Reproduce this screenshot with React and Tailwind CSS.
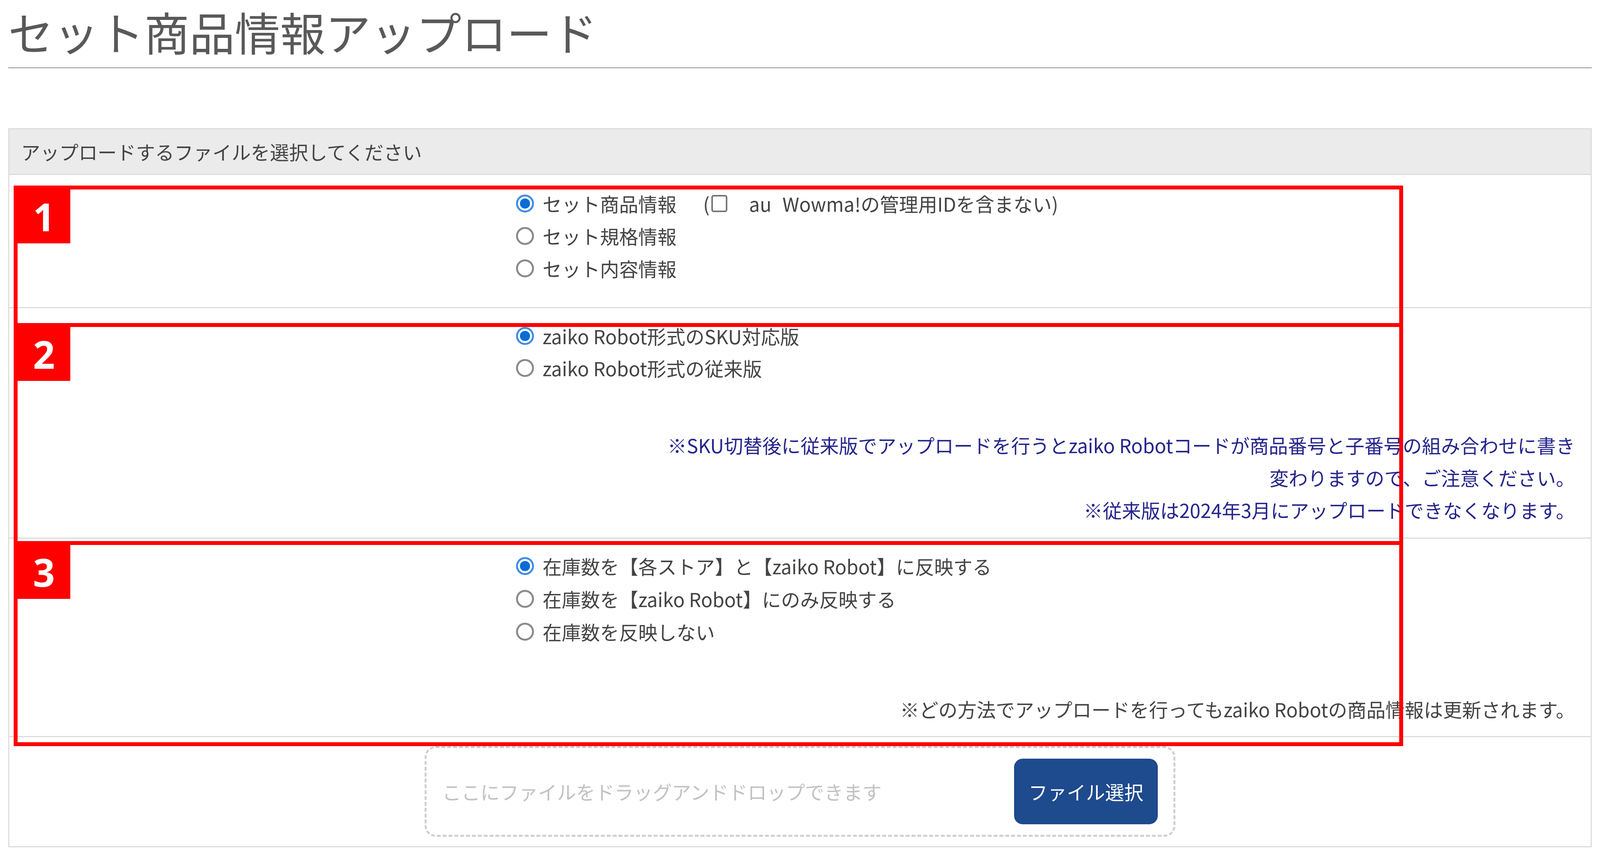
import React from "react";

const rows1 = [
  { label: "セット商品情報", checked: true, extra: true },
  { label: "セット規格情報" },
  { label: "セット内容情報" },
];
const rows2 = [
  { label: "zaiko Robot形式のSKU対応版", checked: true },
  { label: "zaiko Robot形式の従来版" },
];
const rows3 = [
  { label: "在庫数を【各ストア】と【zaiko Robot】に反映する", checked: true },
  { label: "在庫数を【zaiko Robot】にのみ反映する" },
  { label: "在庫数を反映しない" },
];

const Radio = ({ checked }) =>
  checked ? (
    <span className="flex items-center justify-center w-[46px] h-[46px] rounded-full border-[5px] border-[#3d8ee8] bg-white shrink-0">
      <span className="w-[26px] h-[26px] rounded-full bg-[#0a6cd4]" />
    </span>
  ) : (
    <span className="w-[46px] h-[46px] rounded-full border-[5px] border-[#8a8a8a] bg-white shrink-0" />
  );

const Option = ({ label, checked, extra, h }) => (
  <label className={`flex items-center ${h}`}>
    <Radio checked={checked} />
    <span className="ml-[22px]">{label}</span>
    {extra && (
      <>
        <span className="ml-[68px]">(</span>
        <span className="ml-[4px] w-[41px] h-[44px] rounded-[6px] border-[4px] border-[#767676] bg-white" />
        <span className="ml-[56px] mr-[28px]">au</span>
        <span>Wowma!の管理用IDを含まない)</span>
      </>
    )}
  </label>
);

// red annotation frames drawn over the panel
const Marker = ({ n, className }) => (
  <div className={`absolute left-[35px] w-[3557px] border-[10px] border-[#ff0000] pointer-events-none ${className}`}>
    <div className="absolute top-0 left-0 w-[135px] h-[138px] bg-[#ff0000] text-white flex items-center justify-center font-['Noto_Sans',sans-serif] font-bold text-[98px] leading-none">
      {n}
    </div>
  </div>
);

export default function App() {
  return (
    <div className="relative min-h-[2204px] bg-white px-[21px] font-['Noto_Sans_CJK_JP',sans-serif] text-[#444444]">
      <h1 className="pt-[21px] pb-[35px] border-b-[3px] border-[#b3b3b3] text-[116px] leading-none font-normal text-[#595959] whitespace-nowrap">
        セット商品情報アップロード
      </h1>

      <div className="mt-[153px] border-[3px] border-[#dddddd] text-[49px]">
        <div className="h-[117px] flex items-center pl-[30px] bg-[#ebebeb] border-b-[3px] border-[#dddddd]">
          アップロードするファイルを選択してください
        </div>

        <div className="grid grid-cols-[1297px_1fr] pt-[31px] pb-[58px] border-b-[3px] border-[#dddddd]">
          <div />
          <div className="flex flex-col whitespace-nowrap">
            {rows1.map((r) => (
              <Option key={r.label} {...r} h="h-[83px]" />
            ))}
          </div>
        </div>

        <div className="grid grid-cols-[1297px_1fr] pt-[30px] pb-[30px] border-b-[3px] border-[#dddddd]">
          <div />
          <div className="flex flex-col whitespace-nowrap">
            {rows2.map((r) => (
              <Option key={r.label} {...r} h="h-[82px]" />
            ))}
            <p className="mt-[114px] pr-[40px] text-right leading-[83px] text-[#25258c]">
              ※SKU切替後に従来版でアップロードを行うとzaiko Robotコードが商品番号と子番号の組み合わせに書き
              <br />
              変わりますので、ご注意ください。
              <br />
              ※従来版は2024年3月にアップロードできなくなります。
            </p>
          </div>
        </div>

        <div className="grid grid-cols-[1297px_1fr] pt-[28px] pb-[28px] border-b-[3px] border-[#dddddd]">
          <div />
          <div className="flex flex-col whitespace-nowrap">
            {rows3.map((r) => (
              <Option key={r.label} {...r} h="h-[84px]" />
            ))}
            <p className="mt-[114px] pr-[40px] text-right leading-[83px]">
              ※どの方法でアップロードを行ってもzaiko Robotの商品情報は更新されます。
            </p>
          </div>
        </div>

        <div className="pt-[23px] pb-[24px]">
          <div className="mx-auto w-[1922px] h-[232px] flex items-center justify-between pl-[40px] pr-[40px] border-[5px] border-dashed border-[#cfcfcf] rounded-[28px]">
            <span className="text-[#c2c2c2] whitespace-nowrap">ここにファイルをドラッグアンドドロップできます</span>
            <button className="w-[368px] h-[168px] rounded-[22px] bg-[#1e4a8e] text-white text-[49px]">
              ファイル選択
            </button>
          </div>
        </div>
      </div>

      <Marker n="1" className="top-[475px] h-[362px]" />
      <Marker n="2" className="top-[827px] h-[568px]" />
      <Marker n="3" className="top-[1385px] h-[525px]" />
    </div>
  );
}
